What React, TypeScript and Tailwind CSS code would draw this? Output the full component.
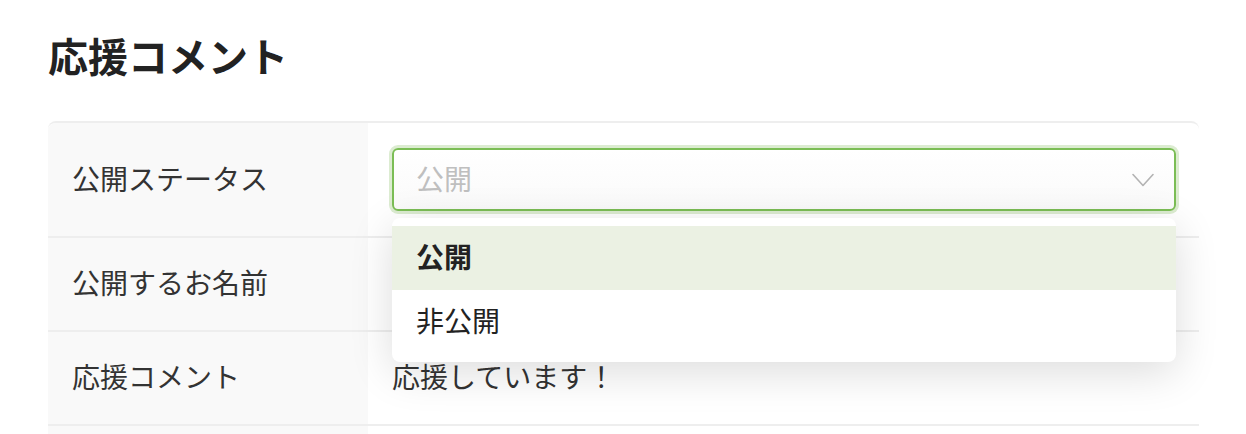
import { useState } from "react";

const font = {
  fontFamily: '"Noto Sans CJK JP", "Noto Sans", sans-serif',
};

function Chevron() {
  return (
    <svg width="22" height="14" viewBox="0 0 22 14" fill="none">
      <path
        d="M1 1.5L11 12.5L21 1.5"
        stroke="#b3b3b3"
        strokeWidth="1.6"
        strokeLinecap="round"
        strokeLinejoin="round"
      />
    </svg>
  );
}

function StatusSelect() {
  const [open] = useState(true);
  const options = ["公開", "非公開"];

  return (
    <div className="relative">
      <div className="flex h-[63px] items-center justify-between rounded-md border-2 border-[#7bbd55] bg-gradient-to-b from-white to-[#fafafa] pl-[22px] pr-5 ring-[3px] ring-[#dcecd1]">
        <span className="pb-1 text-[28px] text-[#bfbfbf]">公開</span>
        <Chevron />
      </div>

      {/* Dropdown menu */}
      {open && (
        <div className="absolute left-0 right-0 top-[70px] z-10 rounded-lg bg-white py-2 shadow-[0_10px_44px_rgba(0,0,0,0.14)]">
          {options.map((option, i) => (
            <div
              key={option}
              className={`flex h-16 items-center px-6 pb-1 text-[28px] text-[#222] ${
                i === 0 ? "bg-[#ebf1e3] font-bold" : ""
              }`}
            >
              {option}
            </div>
          ))}
        </div>
      )}
    </div>
  );
}

function Row({
  label,
  children,
  first = false,
}: {
  label: string;
  children?: React.ReactNode;
  first?: boolean;
}) {
  return (
    <div className="grid grid-cols-[320px_1fr] border-b-2 border-[#eeeeee]">
      <div
        className={`flex items-center bg-[#f9f9f9] pb-1 pl-6 text-[28px] text-[#333] ${
          first ? "rounded-tl-lg" : ""
        }`}
      >
        {label}
      </div>
      <div
        className={`flex items-center pl-6 pr-[23px] text-[28px] text-[#333] ${
          first ? "py-[25px]" : "h-[92px] pb-1"
        }`}
      >
        {children}
      </div>
    </div>
  );
}

export default function App() {
  return (
    <div className="min-h-screen bg-white pl-12 pr-[47px] pt-[25px]" style={font}>
      <h2 className="text-[40px] font-bold leading-[60px] text-[#222]">
        応援コメント
      </h2>

      <div className="mt-[36px] rounded-t-lg border-t-2 border-[#eeeeee]">
        <Row label="公開ステータス" first>
          <div className="w-full">
            <StatusSelect />
          </div>
        </Row>
        <Row label="公開するお名前" />
        <Row label="応援コメント">応援しています！</Row>
        <Row label="" />
      </div>
    </div>
  );
}
